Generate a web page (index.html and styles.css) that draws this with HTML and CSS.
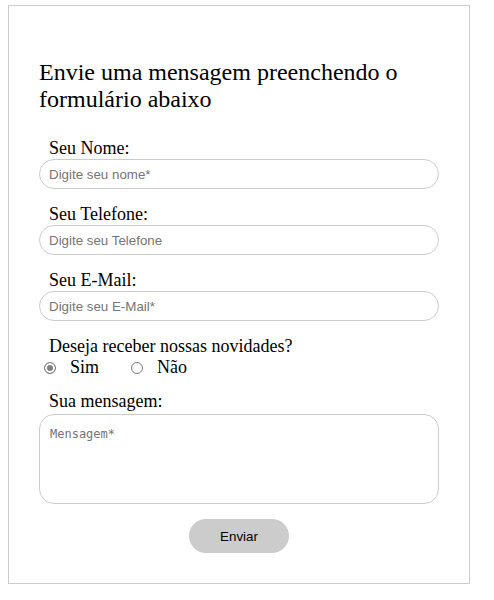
FILE: index.html
```html
<!DOCTYPE html>
<html lang="pt-BR">
<head>
<meta charset="utf-8">
<title>Contato</title>
<link rel="stylesheet" href="styles.css">
</head>
<body>
<div class="card">
  <h2 class="title">Envie uma mensagem preenchendo o formulário abaixo</h2>
  <form class="form">
    <label class="label" for="nome">Seu Nome:</label>
    <input class="field" id="nome" type="text" placeholder="Digite seu nome*">

    <label class="label" for="tel">Seu Telefone:</label>
    <input class="field" id="tel" type="text" placeholder="Digite seu Telefone">

    <label class="label" for="email">Seu E-Mail:</label>
    <input class="field" id="email" type="text" placeholder="Digite seu E-Mail*">

    <div class="label">Deseja receber nossas novidades?</div>
    <div class="radios">
      <input class="radio" type="radio" name="news" id="sim" checked>
      <label class="radio-label" for="sim">Sim</label>
      <input class="radio radio-second" type="radio" name="news" id="nao">
      <label class="radio-label" for="nao">Não</label>
    </div>

    <label class="label label-msg" for="msg">Sua mensagem:</label>
    <textarea class="message" id="msg" placeholder="Mensagem*"></textarea>

    <button class="send" type="button">Enviar</button>
  </form>
</div>
</body>
</html>
```

FILE: styles.css
```css
html, body {
  margin: 0;
  padding: 0;
  background: #fff;
}

body {
  font-family: "Liberation Serif", "Times New Roman", serif;
  color: #000;
}

.card {
  width: 400px;
  margin: 5px 8px;
  padding: 30px;
  border: 1px solid #ccc;
}

.title {
  margin: 23px 0 0;
  font-size: 24px;
  font-weight: normal;
  line-height: 27px;
}

.form {
  margin-top: 25px;
  display: flex;
  flex-direction: column;
}

.label {
  display: block;
  padding-left: 10px;
  font-size: 18px;
  line-height: 21px;
}

.field {
  box-sizing: border-box;
  display: block;
  width: 400px;
  height: 30px;
  margin: 0 0 15px;
  padding: 0 9px;
  border: 1px solid #ccc;
  border-radius: 15px;
  font-family: "Liberation Sans", Arial, sans-serif;
  font-size: 13.333px;
  outline: none;
}

.field::placeholder {
  color: #757575;
}

.radios {
  display: flex;
  align-items: center;
  height: 21px;
  font-size: 18px;
  line-height: 21px;
}

.radio {
  appearance: none;
  -webkit-appearance: none;
  box-sizing: border-box;
  width: 12px;
  height: 12px;
  margin: 1px 0 0 5px;
  border: 1px solid #7f7f7f;
  border-radius: 50%;
  background: #fff;
}

.radio:checked {
  border: 1.5px solid #808080;
  background: #808080;
  box-shadow: inset 0 0 0 2px #fff;
}

.radio-second {
  margin-left: 32px;
}

.radio-label {
  margin-left: 14px;
}

.label-msg {
  margin-top: 13px;
}

.message {
  box-sizing: border-box;
  display: block;
  width: 400px;
  height: 90px;
  margin: 2px 0 0;
  padding: 12px 10px;
  border: 1px solid #ccc;
  border-radius: 15px;
  font-family: "DejaVu Sans Mono", "Liberation Mono", monospace;
  font-size: 12px;
  resize: none;
  outline: none;
}

.message::placeholder {
  color: #757575;
}

.send {
  display: block;
  width: 100px;
  height: 34px;
  margin: 15px auto 0;
  border: none;
  border-radius: 17px;
  background: #ccc;
  color: #000;
  font-family: "Liberation Sans", Arial, sans-serif;
  font-size: 13.333px;
}
```
